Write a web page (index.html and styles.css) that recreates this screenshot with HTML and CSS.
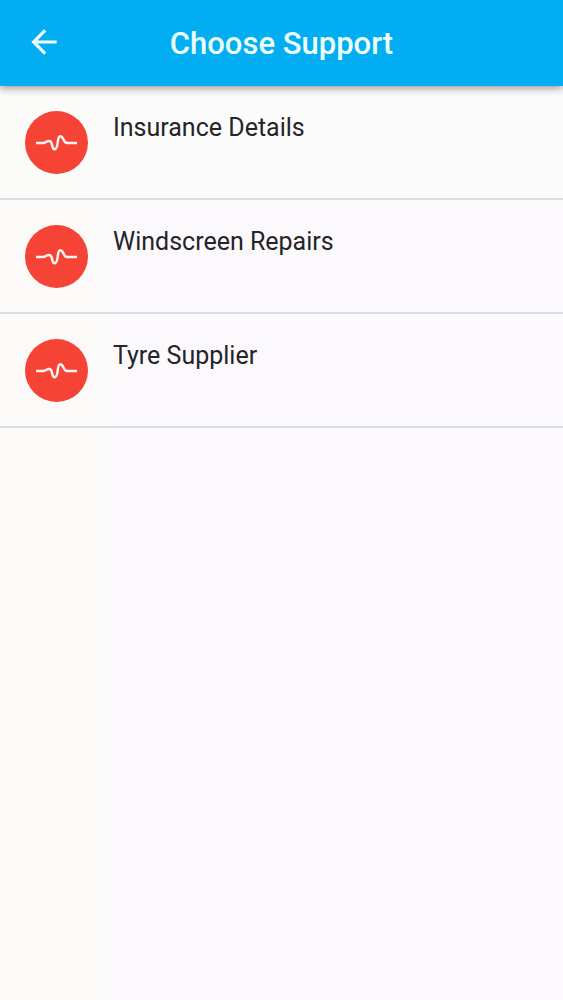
FILE: index.html
```html
<!DOCTYPE html>
<html lang="en">
<head>
<meta charset="utf-8">
<meta name="viewport" content="width=device-width, initial-scale=1">
<title>Choose Support</title>
<link rel="stylesheet" href="styles.css">
</head>
<body>
<svg class="defs" aria-hidden="true">
  <symbol id="pulse" viewBox="0 0 63 63">
    <path d="M11 32H18C21 32 21 30 24 30C28.500 30 26 38.300 29.700 38.300C34 38.300 31.500 25.300 35.200 25.300C39 25.300 38 32 42 32H52" fill="none" stroke="#fff4f0" stroke-width="2.500"/>
  </symbol>
</svg>
<header class="app-bar">
  <button class="back" type="button" aria-label="Back">
    <svg class="back-icon" viewBox="0 0 24 24" aria-hidden="true"><path d="M20 11H7.830l5.590-5.590L12 4l-8 8 8 8 1.410-1.410L7.830 13H20z" fill="#f2ffff"/></svg>
  </button>
  <h1 class="title">Choose Support</h1>
</header>
<main>
  <ul class="list">
    <li><a class="row" href="#insurance"><span class="avatar"><svg class="pulse" aria-hidden="true"><use href="#pulse"/></svg></span><span class="label">Insurance Details</span></a></li>
    <li><a class="row" href="#windscreen"><span class="avatar"><svg class="pulse" aria-hidden="true"><use href="#pulse"/></svg></span><span class="label">Windscreen Repairs</span></a></li>
    <li><a class="row" href="#tyres"><span class="avatar"><svg class="pulse" aria-hidden="true"><use href="#pulse"/></svg></span><span class="label">Tyre Supplier</span></a></li>
  </ul>
</main>
</body>
</html>
```
FILE: styles.css
```css
* {
  box-sizing: border-box;
}

body {
  margin: 0;
  min-height: 100vh;
  font-family: Roboto, "Liberation Sans", sans-serif;
  color: #252427;
  background: linear-gradient(to right, #fbfaf8 92px, #fbf9fc 112px);
}

.defs {
  display: none;
}

.app-bar {
  position: relative;
  display: grid;
  grid-template-columns: 38px 1fr 38px;
  align-items: start;
  height: 86px;
  padding: 23px 25px 0;
  background: #03adf1;
  box-shadow: 0 2px 8px rgba(60, 40, 40, 0.5);
}

.back {
  width: 38px;
  height: 38px;
  padding: 0;
  border: 0;
  background: none;
  cursor: pointer;
}

.back-icon {
  display: block;
  width: 38px;
  height: 38px;
}

.title {
  margin: 0;
  font-size: 31px;
  font-weight: 500;
  line-height: 42px;
  text-align: center;
  color: #ecffff;
}

.list {
  margin: 0;
  padding: 0;
  list-style: none;
}

.row {
  display: flex;
  align-items: flex-start;
  gap: 25px;
  height: 114px;
  padding: 25px 25px 0;
  border-bottom: 2px solid #dddcde;
  color: inherit;
  text-decoration: none;
}

.list li:first-child {
  background: linear-gradient(to right, #fbfbfa, #fcfbfc);
}

.avatar {
  flex: none;
  width: 63px;
  height: 63px;
  border-radius: 50%;
  background: #f54336;
}

.pulse {
  display: block;
  width: 63px;
  height: 63px;
}

.label {
  font-size: 25px;
  line-height: 34px;
}
```
